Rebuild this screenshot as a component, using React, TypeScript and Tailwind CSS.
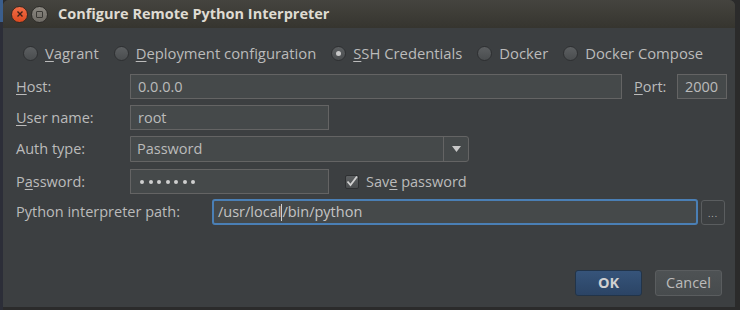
import React from 'react';

const font = { fontFamily: '"Open Sans", "DejaVu Sans", sans-serif' };

function U({ children }: { children: React.ReactNode }) {
  return <span className="underline underline-offset-2 decoration-[1px]">{children}</span>;
}

function Radio({ checked, label }: { checked?: boolean; label: React.ReactNode }) {
  return (
    <div className="flex items-center gap-[7px] shrink-0">
      <div className="w-[15px] h-[15px] rounded-full border border-[#2e3032] bg-gradient-to-b from-[#5c5f61] to-[#4a4d4f] flex items-center justify-center">
        {checked && <div className="w-[5px] h-[5px] rounded-full bg-[#c8c8c8]" />}
      </div>
      <span>{label}</span>
    </div>
  );
}

function Field({ w, children }: { w: string; children?: React.ReactNode }) {
  return (
    <div className={`${w} shrink-0 h-[25px] bg-[#45494a] border border-[#646464] flex items-center px-[7px]`}>
      {children}
    </div>
  );
}

export default function App() {
  return (
    <div className="w-[740px] h-[310px] bg-[#2b2b2b] flex overflow-hidden text-[14.5px] text-[#bbbbbb]" style={font}>
      <div className="w-[3px] shrink-0 h-full flex flex-col">
        <div className="h-[22px] bg-[#3b5e8c]" />
        <div className="flex-1 bg-[#2c2e38]" />
      </div>
      <div className="w-[732px] shrink-0 h-[307px] flex flex-col rounded-t-[6px] overflow-hidden bg-[#3c3f41]">
        {/* Title bar */}
        <div className="h-[28px] shrink-0 bg-gradient-to-b from-[#45443f] to-[#36352f] flex items-center pl-[8px]">
          <div className="w-[17px] h-[17px] rounded-full bg-gradient-to-b from-[#f26d46] to-[#dd4a1f] border border-[#3a2a22] flex items-center justify-center">
            <svg width="8" height="8" viewBox="0 0 8 8">
              <path d="M1.5 1.5 L6.5 6.5 M6.5 1.5 L1.5 6.5" stroke="#3b2018" strokeWidth="1.4" />
            </svg>
          </div>
          <div className="ml-[3px] w-[17px] h-[17px] rounded-full bg-gradient-to-b from-[#8a8780] to-[#6f6c66] border border-[#2e2d2a] flex items-center justify-center">
            <div className="w-[7px] h-[7px] border border-[#3a3935] rounded-[1px]" />
          </div>
          <span className="ml-[10px] font-bold text-[14.5px] text-[#dfdbd2]">Configure Remote Python Interpreter</span>
        </div>

        {/* Body */}
        <div className="flex-1 flex flex-col pl-[13px] pr-[9px]">
          <div className="mt-[15px] h-[20px] flex items-center gap-[15px] pl-[7px] text-[14.8px]">
            <Radio label={<><U>V</U>agrant</>} />
            <Radio label={<><U>D</U>eployment configuration</>} />
            <Radio checked label={<><U>S</U>SH Credentials</>} />
            <Radio label="Docker" />
            <Radio label="Docker Compose" />
          </div>

          <div className="mt-[11px] flex items-center">
            <span className="w-[114px] shrink-0"><U>H</U>ost:</span>
            <Field w="w-[492px]">0.0.0.0</Field>
            <span className="ml-[12px] w-[43px] shrink-0"><U>P</U>ort:</span>
            <Field w="w-[50px]">2000</Field>
          </div>

          <div className="mt-[6px] flex items-center">
            <span className="w-[114px] shrink-0"><U>U</U>ser name:</span>
            <Field w="w-[199px]">root</Field>
          </div>

          <div className="mt-[6px] flex items-center">
            <span className="w-[114px] shrink-0">Auth type:</span>
            <div className="w-[339px] h-[26px] bg-[#45494a] border border-[#646464] rounded-r-[3px] flex">
              <div className="flex-1 flex items-center px-[6px]">Password</div>
              <div className="w-[25px] border-l border-[#646464] flex items-center justify-center">
                <svg width="9" height="6" viewBox="0 0 9 6">
                  <path d="M0 0 H9 L4.5 6 Z" fill="#c8c8c8" />
                </svg>
              </div>
            </div>
          </div>

          <div className="mt-[7px] flex items-center">
            <span className="w-[114px] shrink-0">P<U>a</U>ssword:</span>
            <Field w="w-[199px]">
              <div className="flex gap-[4.5px] pl-[2px]">
                {[0, 1, 2, 3, 4, 5, 6].map((i) => (
                  <div key={i} className="w-[4px] h-[4px] rounded-full bg-[#cfcfcf]" />
                ))}
              </div>
            </Field>
            <div className="ml-[16px] w-[14px] h-[14px] bg-gradient-to-b from-[#5c5f61] to-[#4a4d4f] border border-[#2e3032] rounded-[2px] flex items-center justify-center">
              <svg width="12" height="11" viewBox="0 0 12 11">
                <path d="M1.5 5.5 L4.5 9 L11 0.5" stroke="#d0d0d0" strokeWidth="1.8" fill="none" />
              </svg>
            </div>
            <span className="ml-[7px]">Sav<U>e</U> password</span>
          </div>

          <div className="mt-[5px] flex items-center">
            <span className="w-[196px] shrink-0">Python interpreter path:</span>
            <div className="w-[486px] shrink-0 h-[26px] bg-[#45494a] border-2 border-[#4a7fb5] rounded-[3px] flex items-center px-[4px] text-[#c4c4c4]">
              /usr/local<span className="inline-block w-px h-[17px] bg-[#d0d0d0]" />/bin/python
            </div>
            <div className="ml-[3px] w-[24px] shrink-0 h-[25px] bg-[#3c3f41] border border-[#5a5d5f] rounded-[3px] flex items-end justify-center pb-[6px]">
              <span className="text-[9px] leading-none tracking-[1px]">...</span>
            </div>
          </div>

          <div className="mt-[45px] flex justify-end gap-[13px] pr-[4px]">
            <button className="w-[67px] h-[26px] rounded-[3px] border border-[#223449] bg-gradient-to-b from-[#36547a] to-[#2b4465] font-bold text-[#d0d0d0]">
              OK
            </button>
            <button className="w-[67px] h-[26px] rounded-[3px] border border-[#5a5d5f] bg-gradient-to-b from-[#4e5254] to-[#474b4d] text-[#bbbbbb]">
              Cancel
            </button>
          </div>
        </div>
      </div>
      <div className="flex-1 bg-[#2b2b2b]" />
    </div>
  );
}
